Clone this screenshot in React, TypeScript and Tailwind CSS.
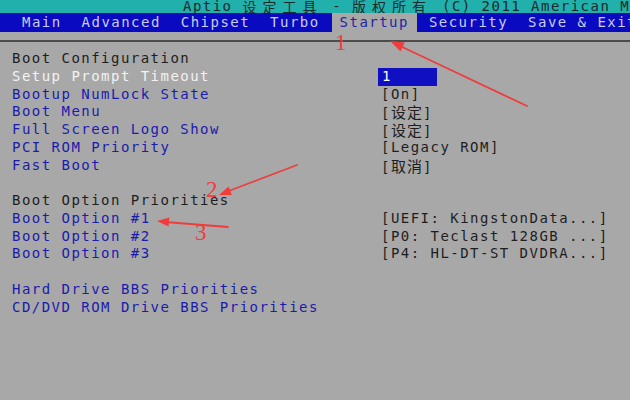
import React from "react";

type Row = {
    label: string;
    tone?: "head" | "link" | "active";
    value?: string;
    selected?: boolean;
};

const rows: (Row | null)[] = [
    { label: "Boot Configuration", tone: "head" },
    { label: "Setup Prompt Timeout", tone: "active", value: "1", selected: true },
    { label: "Bootup NumLock State", value: "[On]" },
    { label: "Boot Menu", value: "[设定]" },
    { label: "Full Screen Logo Show", value: "[设定]" },
    { label: "PCI ROM Priority", value: "[Legacy ROM]" },
    { label: "Fast Boot", value: "[取消]" },
    null,
    { label: "Boot Option Priorities", tone: "head" },
    { label: "Boot Option #1", value: "[UEFI: KingstonData...]" },
    { label: "Boot Option #2", value: "[P0: Teclast 128GB ...]" },
    { label: "Boot Option #3", value: "[P4: HL-DT-ST DVDRA...]" },
    null,
    { label: "Hard Drive BBS Priorities" },
    { label: "CD/DVD ROM Drive BBS Priorities" },
];

const tabs = ["Main", "Advanced", "Chipset", "Turbo", "Startup", "Security", "Save & Exit"];

// latin text sits in fixed cells; CJK glyphs get their own font and spacing
const Mono = ({ text, cjk, latin = "" }: { text: string; cjk: string; latin?: string }) => {
    const parts = text.split(/([\u4e00-\u9fff]+)/).filter(Boolean);
    return (
        <>
            {parts.map((p, i) =>
                /[\u4e00-\u9fff]/.test(p) ? (
                    <span key={i} className={`font-['Noto_Sans_CJK_SC',sans-serif] ${cjk}`}>
                        {p}
                    </span>
                ) : (
                    <span key={i} className={latin}>
                        {p}
                    </span>
                )
            )}
        </>
    );
};

const toneClass = {
    head: "text-[#1e1e1e]",
    link: "text-[#1b1bac]",
    active: "text-[#f2f2f2]",
};

export default function App() {
    return (
        <div className="relative w-[630px] h-[400px] overflow-hidden bg-[#a8a8a8] font-['DejaVu_Sans_Mono','Noto_Sans_CJK_SC',monospace] text-[14px] tracking-[1.47px]">
            <div className="flex items-start h-[13px] bg-[#22b0ad] pl-[183px] whitespace-pre overflow-hidden text-[#1c2a28]">
                <Mono
                    text="Aptio 设定工具 - 版权所有 (C) 2011 American Megatrends, Inc."
                    latin="leading-[13px]"
                    cjk="text-[14px] tracking-[6px] leading-[12px]"
                />
            </div>
            <div className="flex h-[19px] bg-[#0a0ac0] pl-[12px] leading-[19px] whitespace-nowrap">
                {tabs.map((t) => (
                    <span
                        key={t}
                        className={
                            t === "Startup"
                                ? "px-[8px] mx-[2px] bg-[#a8a8a8] text-[#2424a4]"
                                : "px-[10px] text-[#c9cdef]"
                        }
                    >
                        {t}
                    </span>
                ))}
            </div>
            <div className="h-[8px]" />
            <div className="h-[2px] bg-[#4c4c4c]" />
            <div className="pt-[8px] pl-[12px] leading-[17.75px] whitespace-nowrap">
                {rows.map((r, i) =>
                    r === null ? (
                        <div key={i} className="h-[17.75px]" />
                    ) : (
                        <div key={i} className="flex h-[17.75px]">
                            <div className={`w-[369px] ${toneClass[r.tone ?? "link"]}`}>{r.label}</div>
                            {r.value &&
                                (r.selected ? (
                                    <div className="w-[59px] -ml-[3px] pl-[4px] bg-[#1010c2] text-white">
                                        {r.value}
                                    </div>
                                ) : (
                                    <div className="text-[#1e1e1e]">
                                        <Mono text={r.value} cjk="text-[15px] tracking-[1px]" />
                                    </div>
                                ))}
                        </div>
                    )
                )}
            </div>
            <svg className="absolute inset-0 pointer-events-none" width="630" height="400">
                <g fill="#f03c3c" stroke="#f03c3c" strokeLinecap="round">
                    <line x1="527" y1="106" x2="398" y2="45" strokeWidth="1.8" />
                    <polygon points="390,41 400.5,51.5 404.7,42.5" stroke="none" />
                    <line x1="297" y1="165" x2="226" y2="192" strokeWidth="1.8" />
                    <polygon points="219,195 231.8,194.9 228.6,186.5" stroke="none" />
                    <line x1="228" y1="227" x2="165" y2="222" strokeWidth="1.8" />
                    <polygon points="157,221 169.4,217.5 168.6,226.5" stroke="none" />
                </g>
                <g fill="#f03c3c" fontFamily="'Liberation Serif', serif" fontSize="23">
                    <text x="335" y="50">1</text>
                    <text x="206" y="197">2</text>
                    <text x="195" y="240">3</text>
                </g>
            </svg>
        </div>
    );
}
